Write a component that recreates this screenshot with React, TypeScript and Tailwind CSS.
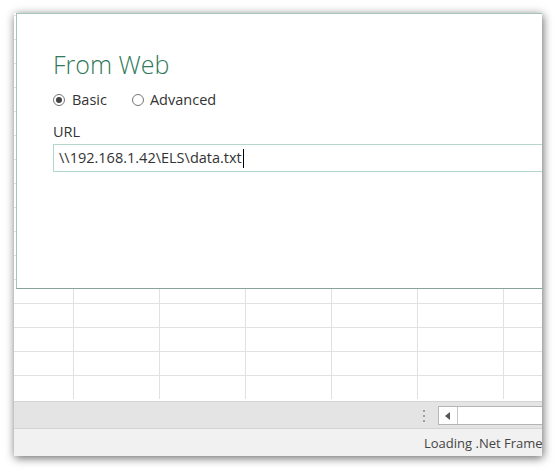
import React from "react";

const font = { fontFamily: '"Open Sans", "Noto Sans", sans-serif' };

export default function App() {
  const rows = Array.from({ length: 16 });
  const cols = Array.from({ length: 6 });
  return (
    <div className="w-[556px] h-[470px] bg-white pt-[13px] pl-[14px]" style={font}>
      <div className="w-[528px] h-[443px] flex flex-col overflow-hidden bg-white shadow-[1px_2px_9px_rgba(0,0,0,0.6)]">
        <div className="relative h-[388px] overflow-hidden">
          <div className="flex flex-col">
            <div className="h-[2px]" />
            {rows.map((_, i) => (
              <div key={i} className="flex h-[24px] border-t border-[#e1e1e1] shrink-0">
                <div className="w-[60px] border-r border-[#e1e1e1] shrink-0" />
                {cols.map((__, j) => (
                  <div key={j} className="w-[86px] border-r border-[#e1e1e1] shrink-0" />
                ))}
              </div>
            ))}
          </div>
          <div className="absolute left-[2px] top-0 w-[600px] h-[276px] bg-white border border-[#a6c6b8] border-b-[#86a497] pl-[36px] pt-[32px]">
            <div className="text-[25px] font-light leading-[36px] text-[#2f7a5a]">From Web</div>
            <div className="flex items-center mt-[8px] text-[14.5px] text-[#333] leading-[20px]">
              <span className="w-[12px] h-[12px] rounded-full border border-[#777] flex items-center justify-center mr-[7px]">
                <span className="w-[6px] h-[6px] rounded-full bg-[#444]" />
              </span>
              <span>Basic</span>
              <span className="w-[12px] h-[12px] rounded-full border border-[#777] ml-[25px] mr-[6px]" />
              <span>Advanced</span>
            </div>
            <div className="mt-[12px] text-[14.5px] text-[#333] leading-[20px]">URL</div>
            <div className="mt-[2px] h-[28px] border border-[#b3d8c8] flex items-center pl-[5px] text-[14.5px] text-[#333]">
              <span>\\192.168.1.42\ELS\data.txt</span>
              <span className="w-[1px] h-[19px] bg-black ml-[1px]" />
            </div>
          </div>
        </div>
        <div className="h-[28px] bg-[#e4e4e4] border-t border-[#cacaca] border-b border-[#d4d4d4] flex items-start pl-[409px] pt-[4px]">
          <div className="flex flex-col gap-[3px] mt-[4px] mr-[13px]">
            <span className="w-[2px] h-[2px] bg-[#a0a0a0]" />
            <span className="w-[2px] h-[2px] bg-[#a0a0a0]" />
            <span className="w-[2px] h-[2px] bg-[#a0a0a0]" />
          </div>
          <div className="flex h-[19px] border border-[#b5b5b5] bg-white">
            <div className="w-[19px] border-r border-[#c5c5c5] flex items-center justify-center">
              <svg width="6" height="8" viewBox="0 0 6 8"><path d="M5 0 L0 4 L5 8 Z" fill="#555" /></svg>
            </div>
            <div className="w-[100px]" />
          </div>
        </div>
        <div className="flex-1 bg-[#f1f1f1] pl-[410px] pt-[4px] text-[13px] text-[#444] whitespace-nowrap leading-[20px]">
          Loading .Net Framework
        </div>
      </div>
    </div>
  );
}
